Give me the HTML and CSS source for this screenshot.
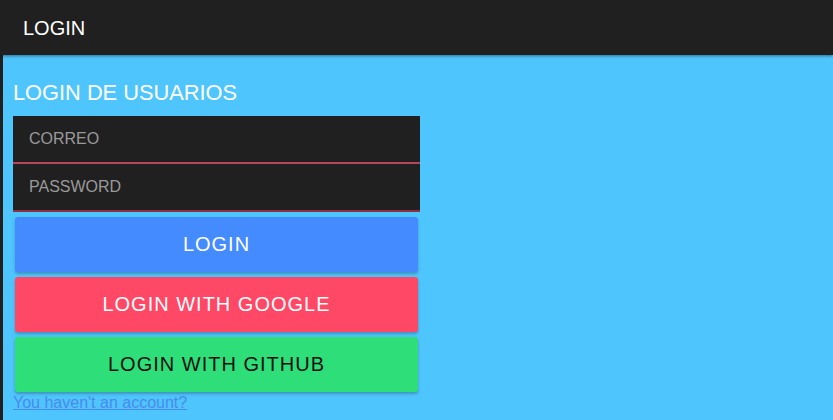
FILE: index.html
```html
<!DOCTYPE html>
<html>
<head>
<meta charset="utf-8">
<link rel="stylesheet" href="styles.css">
</head>
<body>
<header class="topbar"><span class="brand">LOGIN</span></header>
<main class="content">
  <h1 class="title">LOGIN DE USUARIOS</h1>
  <form class="form">
    <input class="field" type="text" placeholder="CORREO">
    <input class="field field-last" type="password" placeholder="PASSWORD">
    <button type="button" class="btn btn-blue">LOGIN</button>
    <button type="button" class="btn btn-red">LOGIN WITH GOOGLE</button>
    <button type="button" class="btn btn-green">LOGIN WITH GITHUB</button>
  </form>
  <a class="link" href="#">You haven't an account?</a>
</main>
</body>
</html>
```
FILE: styles.css
```css
html, body {
  margin: 0;
  height: 100%;
}
body {
  background: #202020;
  font-family: "Liberation Sans", Arial, sans-serif;
  display: flex;
  flex-direction: column;
}
.topbar {
  height: 55px;
  background: #202020;
  display: flex;
  align-items: center;
  padding-left: 23px;
  position: relative;
  z-index: 1;
  box-shadow: 0 1px 3px rgba(0,0,0,0.45);
}
.brand {
  color: #ffffff;
  font-size: 20px;
  padding-top: 1px;
}
.content {
  flex: 1;
  margin-left: 3px;
  background: #4fc5fd;
  padding: 25px 0 0 10px;
}
.title {
  margin: 0;
  color: #ffffff;
  font-size: 21.8px;
  font-weight: normal;
  line-height: 26px;
}
.form {
  width: 407px;
  margin-top: 10px;
  display: flex;
  flex-direction: column;
}
.field {
  box-sizing: border-box;
  height: 48px;
  border: none;
  border-bottom: 2px solid #b8455a;
  background: #202020;
  color: #ddd;
  font-family: "Liberation Sans", Arial, sans-serif;
  font-size: 16px;
  padding: 0 0 0 16px;
  outline: none;
}
.field-last {
  border-bottom-color: #8e3142;
}
.field::placeholder {
  color: #9a9a9a;
}
.btn {
  height: 55px;
  margin: 5px 2px 0 2px;
  border: none;
  border-radius: 3px;
  font-family: "Liberation Sans", Arial, sans-serif;
  font-size: 20px;
  letter-spacing: 1px;
  box-shadow: 0 2px 3px rgba(0,0,0,0.25);
  cursor: pointer;
}
.btn-blue {
  background: #448bff;
  color: #ffffff;
}
.btn-red {
  background: #ff4865;
  color: #ffffff;
}
.btn-green {
  background: #2ede79;
  color: #111111;
}
.link {
  display: inline-block;
  margin-top: 2px;
  color: #4a8af0;
  font-size: 16px;
}
```
